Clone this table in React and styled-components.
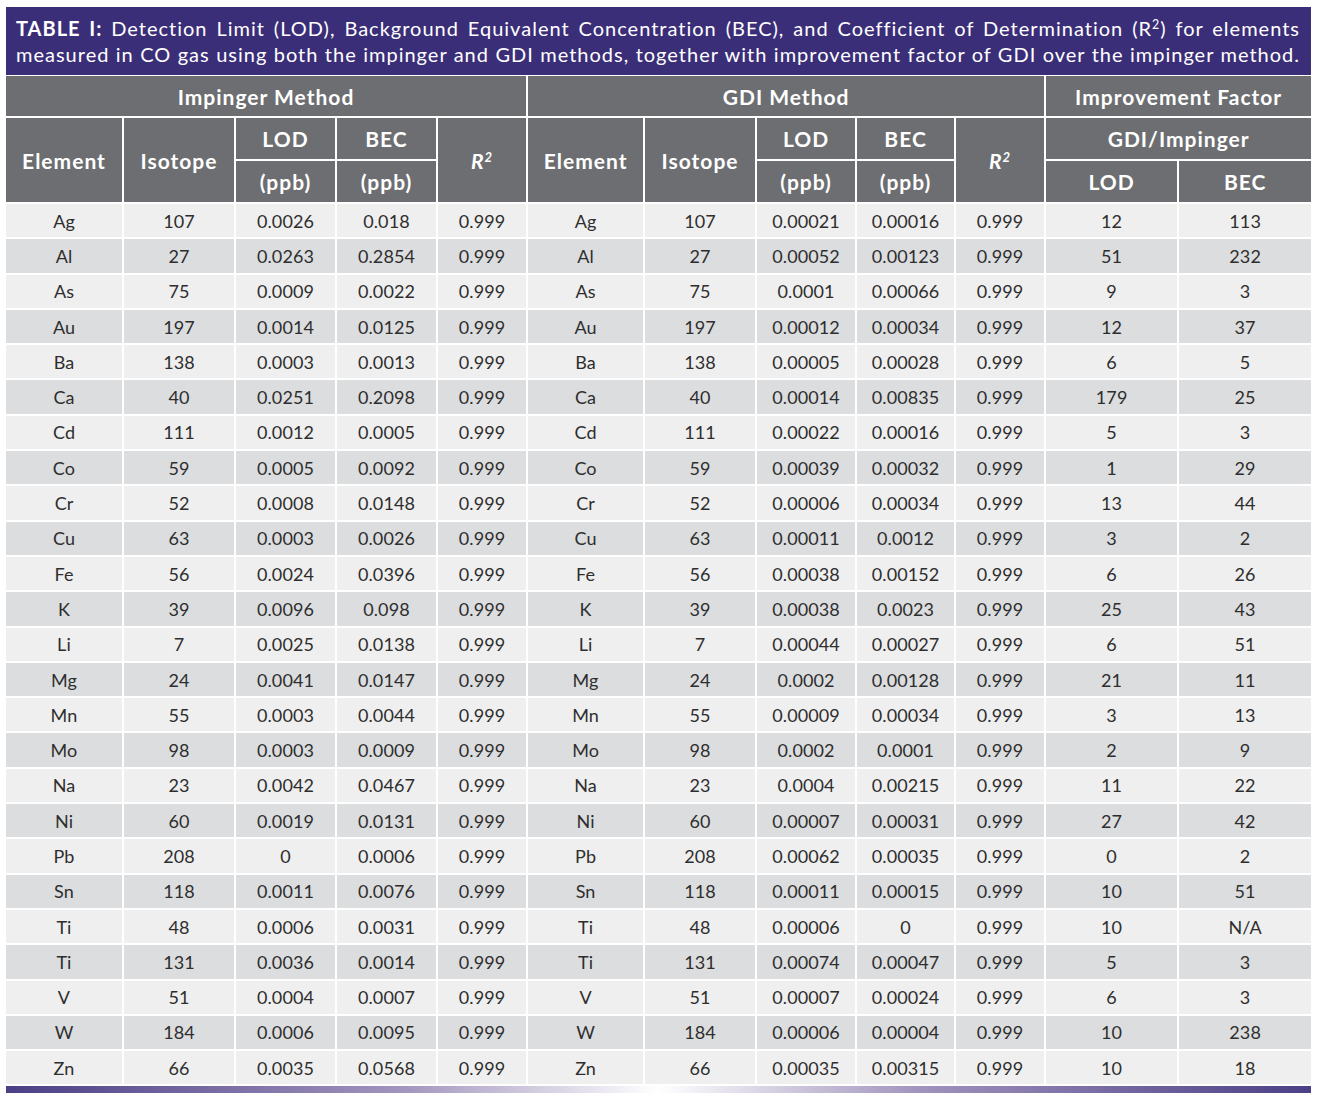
import styled, {createGlobalStyle} from 'styled-components';

const GlobalStyle = createGlobalStyle`
  body {
    margin: 0;
    background: #ffffff;
    font-family: Lato, "Open Sans", sans-serif;
  }
`;

const rows = [
  ['Ag', 107, '0.0026', '0.018', '0.00021', '0.00016', 12, 113],
  ['Al', 27, '0.0263', '0.2854', '0.00052', '0.00123', 51, 232],
  ['As', 75, '0.0009', '0.0022', '0.0001', '0.00066', 9, 3],
  ['Au', 197, '0.0014', '0.0125', '0.00012', '0.00034', 12, 37],
  ['Ba', 138, '0.0003', '0.0013', '0.00005', '0.00028', 6, 5],
  ['Ca', 40, '0.0251', '0.2098', '0.00014', '0.00835', 179, 25],
  ['Cd', 111, '0.0012', '0.0005', '0.00022', '0.00016', 5, 3],
  ['Co', 59, '0.0005', '0.0092', '0.00039', '0.00032', 1, 29],
  ['Cr', 52, '0.0008', '0.0148', '0.00006', '0.00034', 13, 44],
  ['Cu', 63, '0.0003', '0.0026', '0.00011', '0.0012', 3, 2],
  ['Fe', 56, '0.0024', '0.0396', '0.00038', '0.00152', 6, 26],
  ['K', 39, '0.0096', '0.098', '0.00038', '0.0023', 25, 43],
  ['Li', 7, '0.0025', '0.0138', '0.00044', '0.00027', 6, 51],
  ['Mg', 24, '0.0041', '0.0147', '0.0002', '0.00128', 21, 11],
  ['Mn', 55, '0.0003', '0.0044', '0.00009', '0.00034', 3, 13],
  ['Mo', 98, '0.0003', '0.0009', '0.0002', '0.0001', 2, 9],
  ['Na', 23, '0.0042', '0.0467', '0.0004', '0.00215', 11, 22],
  ['Ni', 60, '0.0019', '0.0131', '0.00007', '0.00031', 27, 42],
  ['Pb', 208, '0', '0.0006', '0.00062', '0.00035', 0, 2],
  ['Sn', 118, '0.0011', '0.0076', '0.00011', '0.00015', 10, 51],
  ['Ti', 48, '0.0006', '0.0031', '0.00006', '0', 10, 'N/A'],
  ['Ti', 131, '0.0036', '0.0014', '0.00074', '0.00047', 5, 3],
  ['V', 51, '0.0004', '0.0007', '0.00007', '0.00024', 6, 3],
  ['W', 184, '0.0006', '0.0095', '0.00006', '0.00004', 10, 238],
  ['Zn', 66, '0.0035', '0.0568', '0.00035', '0.00315', 10, 18],
];

const colWidths = [117, 112, 101, 101, 90, 117, 112, 100, 99, 90, 133, 133];

const Page = styled.div`
  padding: 7px 11px 0 6px;
  width: 1305px;
`;

const Caption = styled.div`
  background: #3b2e78;
  color: #ffffff;
  font-size: 20px;
  line-height: 26px;
  padding: 8px 11px 8px 10px;
  letter-spacing: 1px;
`;

const CaptionLine = styled.div`
  text-align: justify;
  text-align-last: justify;
  white-space: nowrap;
`;

const Label = styled.b`
  font-weight: 700;
`;

const Sup = styled.sup`
  font-size: 0.62em;
  line-height: 0;
  vertical-align: 0.55em;
`;

const Table = styled.table`
  width: 1305px;
  table-layout: fixed;
  border-collapse: collapse;
  margin-top: 1px;
`;

const Head = styled.th`
  background: #6d6e71;
  color: #ffffff;
  font-weight: 700;
  font-size: 21px;
  letter-spacing: 1px;
  height: ${(p) => p.$h}px;
  padding: 0;
  border: 2px solid #ffffff;
  border-top: ${(p) => (p.$first ? 'none' : '2px solid #ffffff')};
  vertical-align: middle;
  text-align: center;
  &:first-child {
    border-left: none;
  }
  &:last-child {
    border-right: none;
  }
`;

const Italic = styled.i`
  font-style: italic;
`;

const Row = styled.tr`
  background: ${(p) => (p.$alt ? '#dcdddf' : '#efefef')};
`;

const Cell = styled.td`
  color: #2e2e2e;
  font-size: 18px;
  letter-spacing: 0.1px;
  text-align: center;
  height: 33.3px;
  padding: 0;
  border: 2px solid #ffffff;
  &:first-child {
    border-left: none;
  }
  &:last-child {
    border-right: none;
  }
`;

const FadeBar = styled.div`
  height: 7px;
  background: linear-gradient(to right, #4b3f86 0%, #a093bd 30%, #ffffff 50%, #a093bd 70%, #4b3f86 100%);
`;

const R2 = () => (
  <Italic>
    R<Sup>2</Sup>
  </Italic>
);

export default function App() {
  return (
    <Page>
      <GlobalStyle />
      <Caption>
        <CaptionLine>
          <Label>TABLE I:</Label> Detection Limit (LOD), Background Equivalent Concentration (BEC), and Coefficient of Determination (R<Sup>2</Sup>) for elements
        </CaptionLine>
        <CaptionLine>
          measured in CO gas using both the impinger and GDI methods, together with improvement factor of GDI over the impinger method.
        </CaptionLine>
      </Caption>
      <Table>
        <colgroup>
          {colWidths.map((w, i) => (
            <col key={i} style={{width: w}} />
          ))}
        </colgroup>
        <thead>
          <tr>
            <Head $h={40} $first colSpan={5}>Impinger Method</Head>
            <Head $h={40} $first colSpan={5}>GDI Method</Head>
            <Head $h={40} $first colSpan={2}>Improvement Factor</Head>
          </tr>
          <tr>
            <Head $h={41} rowSpan={2}>Element</Head>
            <Head $h={41} rowSpan={2}>Isotope</Head>
            <Head $h={41}>LOD</Head>
            <Head $h={41}>BEC</Head>
            <Head $h={41} rowSpan={2}><R2 /></Head>
            <Head $h={41} rowSpan={2}>Element</Head>
            <Head $h={41} rowSpan={2}>Isotope</Head>
            <Head $h={41}>LOD</Head>
            <Head $h={41}>BEC</Head>
            <Head $h={41} rowSpan={2}><R2 /></Head>
            <Head $h={41} colSpan={2}>GDI/Impinger</Head>
          </tr>
          <tr>
            <Head $h={41}>(ppb)</Head>
            <Head $h={41}>(ppb)</Head>
            <Head $h={41}>(ppb)</Head>
            <Head $h={41}>(ppb)</Head>
            <Head $h={41}>LOD</Head>
            <Head $h={41}>BEC</Head>
          </tr>
        </thead>
        <tbody>
          {rows.map((r, i) => (
            <Row key={i} $alt={i % 2 === 1}>
              <Cell>{r[0]}</Cell>
              <Cell>{r[1]}</Cell>
              <Cell>{r[2]}</Cell>
              <Cell>{r[3]}</Cell>
              <Cell>0.999</Cell>
              <Cell>{r[0]}</Cell>
              <Cell>{r[1]}</Cell>
              <Cell>{r[4]}</Cell>
              <Cell>{r[5]}</Cell>
              <Cell>0.999</Cell>
              <Cell>{r[6]}</Cell>
              <Cell>{r[7]}</Cell>
            </Row>
          ))}
        </tbody>
      </Table>
      <FadeBar />
    </Page>
  );
}
